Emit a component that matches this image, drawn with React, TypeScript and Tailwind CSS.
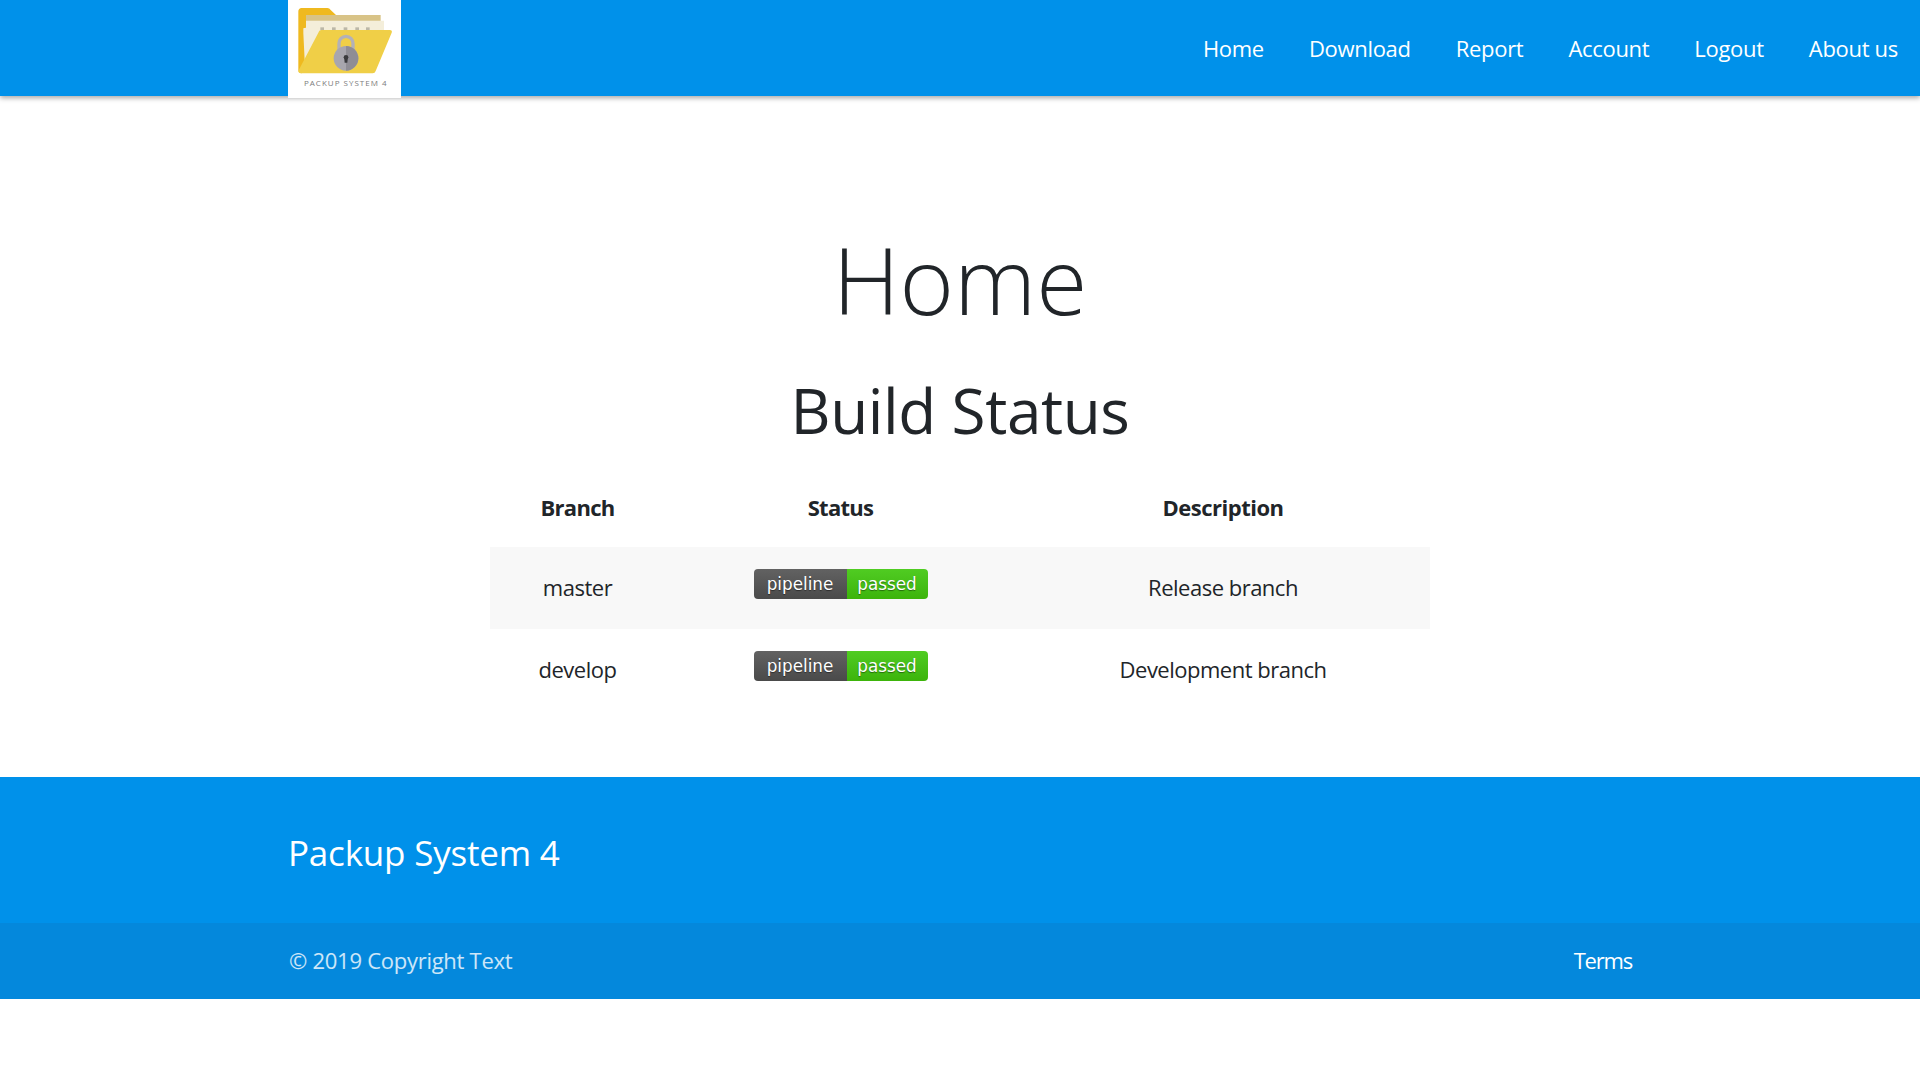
function Logo() {
  return (
    <div className="relative z-10 h-[98px] w-[113px] shrink-0 bg-white">
      <svg width="113" height="98" viewBox="54 0 339 294">
        <path d="M85 35a10 10 0 0 1 10-11h75a12 12 0 0 1 12 6l16 15v150H110l-15 25a10 10 0 0 1-10-10z" fill="#efb91f" />
        <rect x="108" y="45" width="224" height="50" fill="#d8c387" />
        <path d="M100 100V85l8-2V62h234v40H150l-45 100z" fill="#f4eeda" />
        <g fill="#bcb8a8">
          <rect x="151" y="82" width="11" height="9" />
          <rect x="186" y="82" width="11" height="9" />
          <rect x="221" y="82" width="11" height="9" />
          <rect x="256" y="82" width="11" height="9" />
          <rect x="288" y="82" width="11" height="9" />
        </g>
        <path d="M145 98a10 10 0 0 1 9-8h205c6 0 8 4 6 8l-48 115a10 10 0 0 1-9 7H93c-6 0-9-4-7-9z" fill="#f0cf47" />
        <path d="M207 160v-30a21 21 0 0 1 42 0v30" fill="none" stroke="#b3b1b8" strokeWidth="10" />
        <circle cx="228" cy="175" r="37" fill="#a8a6ae" />
        <path d="M228 138a37 37 0 0 1 0 74z" fill="#8f8d95" />
        <path d="M222 168h12l-2 20h-8z" fill="#3a3a3e" />
        <circle cx="228" cy="172" r="7" fill="#3a3a3e" />
      </svg>
      <span className="absolute left-[16px] top-[78px] whitespace-nowrap text-[8px] leading-[10px] tracking-[1px] text-[#7d7d7d]">PACKUP SYSTEM 4</span>
    </div>
  );
}

function Badge() {
  return (
    <div className="inline-flex h-[30px] w-[174px] overflow-hidden rounded-[4px] font-['DejaVu_Sans'] text-[16.8px] leading-[30px] tracking-normal text-white [text-shadow:0_1px_1px_rgba(0,0,0,0.45)]">
      <span className="w-[93px] bg-gradient-to-b from-[#626262] to-[#4a4a4a] text-center">pipeline</span>
      <span className="w-[81px] bg-gradient-to-b from-[#50cc22] to-[#3cb40a] text-center">passed</span>
    </div>
  );
}

const rows = [
  { branch: "master", desc: "Release branch", bg: "bg-[#f8f8f8]" },
  { branch: "develop", desc: "Development branch", bg: "bg-white" },
];

export default function App() {
  return (
    <div className="min-h-[1080px] bg-white font-['Open_Sans',sans-serif] text-[#212529]">
      <header className="flex h-24 items-start bg-[#0091ea] pl-[288px] pr-[22px] shadow-[0_2px_5px_rgba(0,0,0,0.35)]">
        <Logo />
        <nav className="ml-auto flex h-24 items-center gap-[45px] text-[22px] tracking-[-0.3px] text-white">
          <a>Home</a>
          <a>Download</a>
          <a>Report</a>
          <a>Account</a>
          <a>Logout</a>
          <a>About us</a>
        </nav>
      </header>
      <main className="flex flex-col items-center pt-[118px]">
        <h1 className="h-[130px] text-[93px] font-light leading-[130px]">Home</h1>
        <h2 className="mt-[24px] h-[84px] text-[62px] font-normal leading-[84px] tracking-[-0.4px]">Build Status</h2>
        <table className="mt-[17px] w-[940px] table-fixed border-collapse text-center text-[22px] tracking-[-0.5px]">
          <thead>
            <tr className="h-[78px]">
              <th className="w-[175px] pb-[2px] font-bold tracking-[-0.7px]">Branch</th>
              <th className="w-[351px] pb-[2px] font-bold tracking-[-0.7px]">Status</th>
              <th className="pb-[2px] font-bold">Description</th>
            </tr>
          </thead>
          <tbody>
            {rows.map((r) => (
              <tr key={r.branch} className={`h-[82px] ${r.bg}`}>
                <td className="pb-[2px]">{r.branch}</td>
                <td><div className="mb-[8px] flex justify-center"><Badge /></div></td>
                <td className="pb-[2px]">{r.desc}</td>
              </tr>
            ))}
          </tbody>
        </table>
      </main>
      <footer className="mt-[66px] text-white">
        <div className="flex h-[146px] items-center bg-[#0091ea] pl-[288px] pt-[6px] text-[35px] tracking-[-0.2px]">Packup System 4</div>
        <div className="flex h-[76px] items-center justify-between bg-[#0488dc] pb-[1px] pl-[289px] pr-[288px] text-[22px] tracking-[-0.27px]">
          <span className="text-white/80">© 2019 Copyright Text</span>
          <a className="tracking-[-1.2px]">Terms</a>
        </div>
      </footer>
    </div>
  );
}
